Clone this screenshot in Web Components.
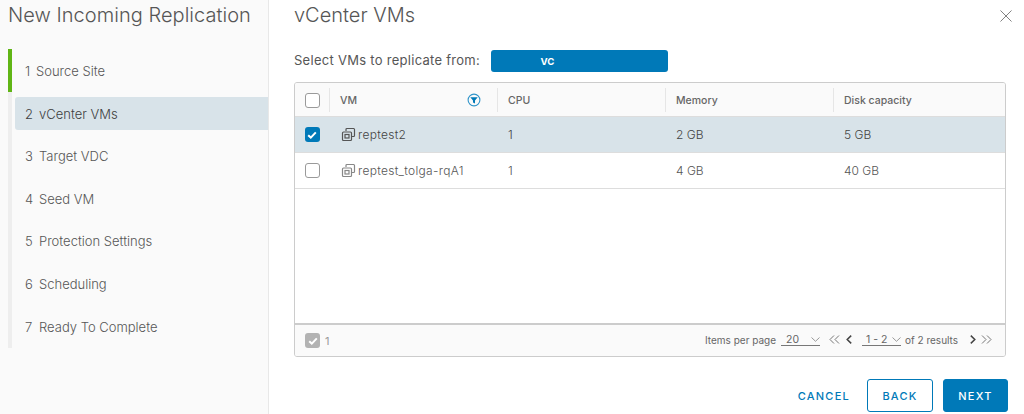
<!DOCTYPE html>
<html><head><meta charset="utf-8">
<style>
html,body{margin:0;padding:0;background:#fff;overflow:hidden}
body{font-family:Inter,"Liberation Sans",sans-serif;color:#565656}
</style></head><body>
<replication-wizard>
  <wizard-nav slot="nav">
    <wizard-step state="done" num="1" label="Source Site"></wizard-step>
    <wizard-step state="active" num="2" label="vCenter VMs"></wizard-step>
    <wizard-step num="3" label="Target VDC"></wizard-step>
    <wizard-step num="4" label="Seed VM"></wizard-step>
    <wizard-step num="5" label="Protection Settings"></wizard-step>
    <wizard-step num="6" label="Scheduling"></wizard-step>
    <wizard-step num="7" label="Ready To Complete"></wizard-step>
  </wizard-nav>
  <vm-page slot="main"></vm-page>
</replication-wizard>
<script>
function def(name, html){
  customElements.define(name, class extends HTMLElement{
    connectedCallback(){
      if(this.shadowRoot) return;
      const r=this.attachShadow({mode:'open'});
      r.innerHTML=typeof html==='function'?html(this):html;
    }
  });
}
const CHECK='<svg width="10" height="8" viewBox="0 0 10 8"><path d="M1.2 4.2 3.8 6.6 8.8 1.4" fill="none" stroke="#fff" stroke-width="2"/></svg>';
const VM=c=>`<svg width="15" height="15" viewBox="0 0 15 15" fill="none" stroke="${c}" stroke-width="1.2"><path d="M5 4V2.4C5 1.9 5.4 1.5 5.9 1.5H12.6C13.1 1.5 13.5 1.9 13.5 2.4V8.6C13.5 9.1 13.1 9.5 12.6 9.5H11"/><rect x="1.5" y="5" width="9" height="8.5" rx="1"/><rect x="4" y="7.5" width="4" height="3.5"/></svg>`;

def('replication-wizard',`<style>
:host{display:grid;grid-template-columns:269px 1fr;width:1024px;height:414px}
.side{background:#fafafa;border-right:1px solid #e8e8e8;box-sizing:border-box;height:414px;overflow:hidden}
h1{font:300 20px/24px Inter,"Liberation Sans",sans-serif;color:#565656;margin:0;padding:3px 0 0 8px;white-space:nowrap;letter-spacing:.04px}
.main{min-width:0}
</style><div class="side"><h1>New Incoming Replication</h1><slot name="nav"></slot></div><div class="main"><slot name="main"></slot></div>`);

def('wizard-nav',`<style>
:host{display:block;margin:22px 0 0 8px;border-left:4px solid #eeeeee;width:256px;height:299px;position:relative}
.g{position:absolute;left:-4px;top:0;width:4px;height:43px;background:#60b515}
.list{display:flex;flex-direction:column}
</style><div class="g"></div><div class="list"><slot></slot></div>`);

def('wizard-step',h=>{const a=h.getAttribute('state')==='active',n=h.getAttribute('num');return `<style>
:host{display:block;height:42.6px;padding-left:3px}
.b{height:33px;margin-top:5px;padding-top:1px;box-sizing:border-box;display:flex;align-items:center;padding-left:10px;font-size:13px;font-weight:300;color:${a?'#3f3f3f':'#565656'};white-space:nowrap;border-radius:3px 0 0 3px;background:${a?'#d8e3e9':'transparent'}}
.n{width:${n==='1'?11:14}px}
</style><div class="b"><span class="n">${n}</span><span>${h.getAttribute('label')}</span></div>`});

def('vm-page',`<style>
:host{display:block;padding:0 18px 0 25px;position:relative;height:414px;box-sizing:border-box}
h2{font:300 20px/24px Inter,"Liberation Sans",sans-serif;color:#565656;margin:0;padding-top:3px}
.x{position:absolute;right:12px;top:10px;width:12px;height:12px}
.sel{display:flex;align-items:center;height:22px;margin-top:23px;font-size:13px;color:#565656;letter-spacing:.28px}
.sel span{width:197px;padding-bottom:2px}
.vc{width:177px;height:22px;background:#0079b8;border-radius:3px;color:#fff;font-size:9.6px;font-weight:700;letter-spacing:0;display:flex;align-items:center;justify-content:center;box-sizing:border-box;padding-right:64px}
.acts{display:flex;justify-content:flex-end;align-items:center;margin-top:22px;margin-right:-2px}
</style>
<h2>vCenter VMs</h2>
<svg class="x" viewBox="0 0 13 13"><path d="M.5.5 12.5 12.5M12.5.5.5 12.5" stroke="#777" stroke-width="1" fill="none"/></svg>
<div class="sel"><span>Select VMs to replicate from:</span><div class="vc">VC</div></div>
<vm-grid style="margin-top:10px"></vm-grid>
<div class="acts"><wiz-btn kind="link">CANCEL</wiz-btn><wiz-btn kind="outline">BACK</wiz-btn><wiz-btn kind="solid">NEXT</wiz-btn></div>`);

def('wiz-btn',h=>{const k=h.getAttribute('kind');return `<style>
:host{display:block;margin-left:${k==='solid'?'10px':k==='outline'?'17px':'0'}}
button{font:500 11px Inter,"Liberation Sans",sans-serif;letter-spacing:1.25px;height:33px;width:${k==='link'?'auto':k==='solid'?'65px':'66px'};border-radius:3px;box-sizing:border-box;padding:0;
${k==='solid'?'background:#0079b8;border:1px solid #0079b8;color:#fff;':k==='outline'?'background:#fff;border:1px solid #0079b8;color:#0079b8;':'background:transparent;border:0;color:#0079b8;'}}
</style><button><slot></slot></button>`});

def('vm-grid',`<style>
:host{display:flex;flex-direction:column;height:275px;width:712px;box-sizing:border-box;border:1px solid #ccc;border-radius:3px;background:#fff;overflow:hidden}
.body{flex:1}
.foot{height:31px;background:#fafafa;border-top:2px solid #ccc;display:flex;align-items:center;font-size:10px;color:#777;padding:0 13px 0 10px}
.sc{width:15px;height:15px;background:#b3b3b3;border-radius:3px;display:flex;align-items:center;justify-content:center;margin-right:5px}
.n1{color:#999;font-size:11px}
.sp{flex:1}
.pg{display:flex;align-items:center;white-space:nowrap;font-size:10px;color:#666;padding-bottom:2px}
.dd{display:inline-flex;align-items:center;justify-content:space-between;border-bottom:1px solid #777;height:13px;box-sizing:border-box;margin-left:4px;font-size:10.5px;padding:0 0 0 5px}
</style>
<div class="body">
<vm-head></vm-head>
<vm-row selected name="reptest2" cpu="1" mem="2 GB" disk="5 GB"></vm-row>
<vm-row name="reptest_tolga-rqA1" cpu="1" mem="4 GB" disk="40 GB"></vm-row>
</div>
<div class="foot">
<span class="sc">${CHECK}</span><span class="n1">1</span><span class="sp"></span>
<div class="pg"><span style="width:72px">Items per page</span>
<span class="dd" style="width:39px">20<svg width="9" height="5" viewBox="0 0 9 5"><path d="M.5.5 4.5 4.3 8.5.5" fill="none" stroke="#999"/></svg></span>
<svg style="margin-left:9px" width="11" height="9" viewBox="0 0 11 9"><path d="M5 .5 1 4.5 5 8.5M10 .5 6 4.5 10 8.5" fill="none" stroke="#777"/></svg>
<svg style="margin-left:6px" width="6" height="9" viewBox="0 0 6 9"><path d="M5.2.6 1.2 4.5 5.2 8.4" fill="none" stroke="#444" stroke-width="1.5"/></svg>
<span class="dd" style="width:39px;margin-left:10px;padding-left:4px">1 - 2<svg width="9" height="5" viewBox="0 0 9 5"><path d="M.5.5 4.5 4.3 8.5.5" fill="none" stroke="#999"/></svg></span>
<span style="margin-left:4px;width:54px">of 2 results</span>
<svg style="margin-left:11px" width="6" height="9" viewBox="0 0 6 9"><path d="M.8.6 4.8 4.5.8 8.4" fill="none" stroke="#444" stroke-width="1.5"/></svg>
<svg style="margin-left:5px" width="11" height="9" viewBox="0 0 11 9"><path d="M1 .5 5 4.5 1 8.5M6 .5 10 4.5 6 8.5" fill="none" stroke="#777"/></svg>
</div></div>`);

const COLS='grid-template-columns:34px 168px 168px 168px 1fr';
def('vm-head',`<style>
:host{display:grid;${COLS};height:34px;background:#fafafa;border-bottom:1px solid #ddd;box-sizing:border-box;font-size:10.5px;font-weight:500;color:#666;align-items:center}
.c{display:flex;align-items:center;height:24px;padding:2px 0 0 10px;border-left:1px solid #e6e6e6;box-sizing:border-box;position:relative}
.k{display:flex;justify-content:center;padding-top:1px}
.f{position:absolute;right:16px;top:5px}
</style>
<div class="k"><vm-check></vm-check></div>
<div class="c">VM<svg class="f" width="14" height="14" viewBox="0 0 14 14"><circle cx="7" cy="7" r="5.9" fill="none" stroke="#2f94c9" stroke-width="1.1"/><path d="M3.3 4.2H10.7L8 7.6V10.6L6 9.6V7.6Z" fill="#0079b8"/></svg></div>
<div class="c">CPU</div><div class="c">Memory</div><div class="c">Disk capacity</div>`);

def('vm-row',h=>{const s=h.hasAttribute('selected');return `<style>
:host{display:grid;${COLS};height:36px;background:${s?'#d8e3e9':'#fff'};border-bottom:1px solid #ddd;box-sizing:border-box;font-size:12px;font-weight:300;color:${s?'#444':'#565656'};align-items:center}
.c{padding-left:11px;display:flex;align-items:center}
.nm{padding-left:12px;letter-spacing:.3px}
.k{display:flex;justify-content:center}
.i{margin-right:2px;display:inline-flex}
</style>
<div class="k"><vm-check ${s?'on':''}></vm-check></div>
<div class="c nm"><span class="i">${VM(s?'#555':'#888')}</span>${h.getAttribute('name')}</div>
<div class="c">${h.getAttribute('cpu')}</div><div class="c">${h.getAttribute('mem')}</div><div class="c">${h.getAttribute('disk')}</div>`});

def('vm-check',h=>{const on=h.hasAttribute('on');return `<style>
:host{display:flex;width:15px;height:15px;box-sizing:border-box;border-radius:3px;align-items:center;justify-content:center;${on?'background:#0079b8;':'border:1px solid #9a9a9a;background:#fff;'}}
</style>${on?CHECK:''}`});
</script>
</body></html>
